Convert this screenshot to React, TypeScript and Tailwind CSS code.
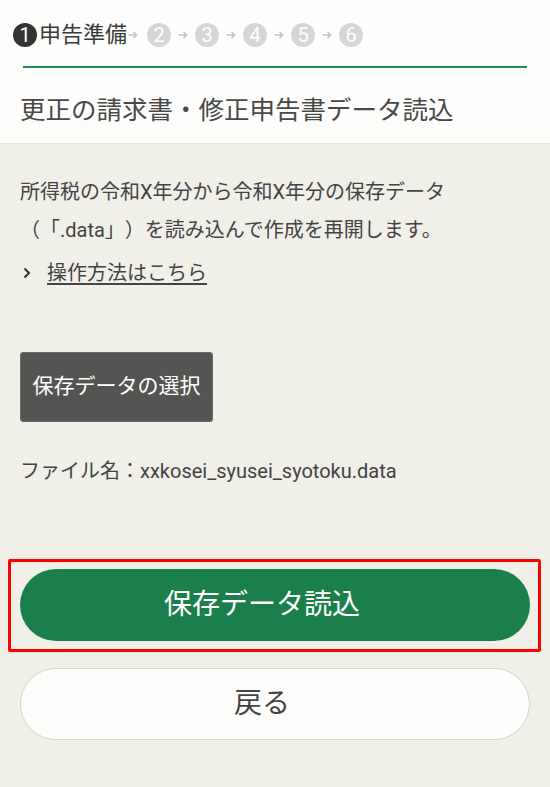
import React from "react";

const font = { fontFamily: 'Roboto, "Noto Sans CJK JP", sans-serif' };

function Arrow({ first }: { first?: boolean }) {
  return (
    <svg
      width="10"
      height="10"
      viewBox="0 0 10 10"
      className={first ? "ml-[1px] mr-[9px]" : "mx-[7px]"}
    >
      <path d="M0.5 5h8M5.5 2L8.7 5l-3.2 3" fill="none" stroke="#c4c4c4" strokeWidth="1.5" />
    </svg>
  );
}

function Circle({ n, active }: { n: number; active?: boolean }) {
  return (
    <div
      className={
        "w-[24px] h-[24px] rounded-full flex items-center justify-center text-white text-[20px] leading-none " +
        (active ? "bg-[#333333]" : "bg-[#d6d6d6]")
      }
    >
      {n}
    </div>
  );
}

export default function App() {
  return (
    <div
      className="w-[550px] min-h-[787px] bg-[#f0efe8] text-[#444444] [text-spacing-trim:space-all]"
      style={font}
    >
      <div className="bg-[#fdfefc] border-b border-[#e6e5de] pt-[23px] pb-[15px]">
        <div className="flex items-center pl-[13px] h-[24px]">
          <Circle n={1} active />
          <span className="ml-[2px] text-[22px] leading-none text-[#3a3a3a]">申告準備</span>
          <Arrow first />
          <Circle n={2} />
          <Arrow />
          <Circle n={3} />
          <Arrow />
          <Circle n={4} />
          <Arrow />
          <Circle n={5} />
          <Arrow />
          <Circle n={6} />
        </div>
        <div className="mt-[19px] mx-[23px] h-[2px] bg-[#23865a]" />
        <div className="mt-[24px] pl-[20px] text-[25.5px] leading-[36px] text-[#484848]">
          更正の請求書・修正申告書データ読込
        </div>
      </div>

      <div className="px-[20px] pt-[29px]">
        <p className="text-[20px] leading-[38px] text-[#444444]">
          所得税の令和X年分から令和X年分の保存データ
          <br />
          （「.data」）を読み込んで作成を再開します。
        </p>
        <div className="mt-[5px] flex items-center h-[38px]">
          <svg width="10" height="12" viewBox="0 0 10 12" className="ml-[2px] mr-[15px]">
            <path d="M2.5 1.5L7 6l-4.5 4.5" fill="none" stroke="#333" strokeWidth="2" />
          </svg>
          <span className="text-[20px] underline underline-offset-[3px] text-[#444444]">操作方法はこちら</span>
        </div>

        <div className="mt-[60px] w-[193px] h-[70px] rounded-[3px] bg-[#545553] border border-[#6a6b68] flex items-center justify-center text-white text-[21px]">
          保存データの選択
        </div>

        <div className="mt-[30px] text-[20px] leading-[38px] text-[#444444]">
          ファイル名：xxkosei_syusei_syotoku.data
        </div>

        <div className="relative mt-[79px]">
          <div className="h-[72px] rounded-full bg-[#1b7f4c] flex items-center justify-center pr-[26px] text-white text-[28px]">
            保存データ読込
          </div>
          <div className="absolute left-[-12px] right-[-11px] top-[-10px] bottom-[-11px] border-[3px] border-[#ff0000] rounded-[2px] pointer-events-none" />
        </div>

        <div className="mt-[27px] h-[72px] rounded-full bg-[#fdfefc] border border-[#dcd2c9] flex items-center justify-center pr-[26px] text-[28px] text-[#444444]">
          戻る
        </div>
      </div>
    </div>
  );
}
